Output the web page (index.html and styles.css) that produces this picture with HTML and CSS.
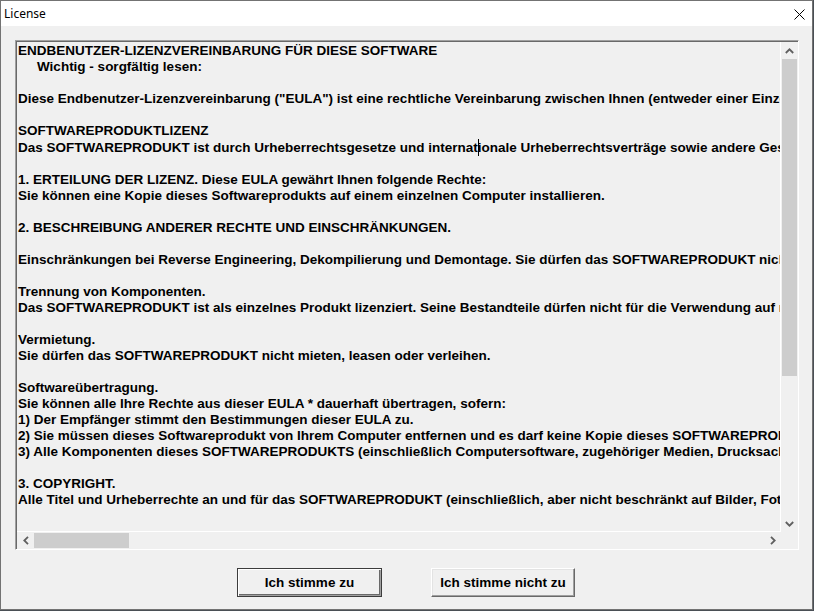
FILE: index.html
```html
<!DOCTYPE html>
<html lang="de">
<head>
<meta charset="utf-8">
<title>License</title>
<link rel="stylesheet" href="styles.css">
</head>
<body>
<div class="window">
  <div class="titlebar">
    <span class="title">License</span>
    <span class="close">
      <svg width="11" height="11" viewBox="0 0 11 11"><path d="M0.5 0.5 L10.5 10.5 M10.5 0.5 L0.5 10.5" stroke="#000" stroke-width="1" fill="none"/></svg>
    </span>
  </div>
  <div class="content">
    <div class="editbox">
      <div class="inner">
        <div class="text">ENDBENUTZER-LIZENZVEREINBARUNG FÜR DIESE SOFTWARE
<span class="indent">Wichtig - sorgfältig lesen:</span>

Diese Endbenutzer-Lizenzvereinbarung ("EULA") ist eine rechtliche Vereinbarung zwischen Ihnen (entweder einer Einzelperson oder einer juristischen Person) und dem Hersteller.

SOFTWAREPRODUKTLIZENZ
Das SOFTWAREPRODUKT ist durch Urheberrechtsgesetze und internat<span class="caret"></span>ionale Urheberrechtsverträge sowie andere Gesetze und Verträge zum Schutz geistigen Eigentums geschützt.

1. ERTEILUNG DER LIZENZ. Diese EULA gewährt Ihnen folgende Rechte:
Sie können eine Kopie dieses Softwareprodukts auf einem einzelnen Computer installieren.

2. BESCHREIBUNG ANDERER RECHTE UND EINSCHRÄNKUNGEN.

Einschränkungen bei Reverse Engineering, Dekompilierung und Demontage. Sie dürfen das SOFTWAREPRODUKT nicht zurückentwickeln, dekompilieren oder disassemblieren.

Trennung von Komponenten.
Das SOFTWAREPRODUKT ist als einzelnes Produkt lizenziert. Seine Bestandteile dürfen nicht für die Verwendung auf mehr als einem Computer getrennt werden.

Vermietung.
Sie dürfen das SOFTWAREPRODUKT nicht mieten, leasen oder verleihen.

Softwareübertragung.
Sie können alle Ihre Rechte aus dieser EULA * dauerhaft übertragen, sofern:
1) Der Empfänger stimmt den Bestimmungen dieser EULA zu.
2) Sie müssen dieses Softwareprodukt von Ihrem Computer entfernen und es darf keine Kopie dieses SOFTWAREPRODUKTS zurückbleiben.
3) Alle Komponenten dieses SOFTWAREPRODUKTS (einschließlich Computersoftware, zugehöriger Medien, Drucksachen und Online-Dokumentation) werden übertragen.

3. COPYRIGHT.
Alle Titel und Urheberrechte an und für das SOFTWAREPRODUKT (einschließlich, aber nicht beschränkt auf Bilder, Fotos, Animationen, Video, Audio, Musik und Text) liegen beim Hersteller.</div>
        <div class="vscroll">
          <div class="sbtn">
            <svg width="9" height="6" viewBox="0 0 9 6"><path d="M0.8 5 L4.5 1.3 L8.2 5" stroke="#606060" stroke-width="1.8" fill="none"/></svg>
          </div>
          <div class="vtrack"><div class="vthumb"></div></div>
          <div class="sbtn">
            <svg width="9" height="6" viewBox="0 0 9 6"><path d="M0.8 1 L4.5 4.7 L8.2 1" stroke="#606060" stroke-width="1.8" fill="none"/></svg>
          </div>
        </div>
        <div class="hscroll">
          <div class="sbtn">
            <svg width="6" height="9" viewBox="0 0 6 9"><path d="M5 0.8 L1.3 4.5 L5 8.2" stroke="#606060" stroke-width="1.8" fill="none"/></svg>
          </div>
          <div class="htrack"><div class="hthumb"></div></div>
          <div class="sbtn">
            <svg width="6" height="9" viewBox="0 0 6 9"><path d="M1 0.8 L4.7 4.5 L1 8.2" stroke="#606060" stroke-width="1.8" fill="none"/></svg>
          </div>
        </div>
        <div class="corner"></div>
      </div>
    </div>
    <div class="buttons">
      <button class="btn default">Ich stimme zu</button>
      <button class="btn">Ich stimme nicht zu</button>
    </div>
  </div>
</div>
</body>
</html>
```
FILE: styles.css
```css
html, body {
  margin: 0;
  padding: 0;
  background: #4a4f55;
}
body {
  width: 814px;
  height: 611px;
  overflow: hidden;
}
.window {
  box-sizing: border-box;
  width: 813px;
  height: 610px;
  border: 1px solid #737373;
  background: #f0f0f0;
  display: flex;
  flex-direction: column;
}
.titlebar {
  height: 25px;
  flex: none;
  background: #ffffff;
  display: flex;
  align-items: center;
  justify-content: space-between;
  padding: 0 7px 0 3px;
}
.title {
  font-family: "Noto Sans", "Liberation Sans", sans-serif;
  font-size: 12px;
  color: #000;
  padding-bottom: 1px;
}
.close {
  display: flex;
  align-items: center;
  padding-top: 1px;
}
.content {
  flex: 1;
  display: flex;
  flex-direction: column;
  padding: 14px 0 0 14px;
}
.editbox {
  box-sizing: border-box;
  width: 784px;
  height: 510px;
  border-style: solid;
  border-width: 1px;
  border-color: #a0a0a0 #ffffff #ffffff #a0a0a0;
}
.inner {
  box-sizing: border-box;
  height: 100%;
  border-top: 1px solid #696969;
  border-left: 1px solid #696969;
  display: grid;
  grid-template-columns: 764px 17px;
  grid-template-rows: 490px 17px;
}
.text {
  box-sizing: border-box;
  overflow: hidden;
  white-space: pre;
  border-right: 1px solid #ffffff;
  border-bottom: 1px solid #ffffff;
  padding: 1px 0 0 1px;
  font-family: "Liberation Sans", Arial, sans-serif;
  font-weight: bold;
  font-size: 13.5px;
  line-height: 16px;
  color: #000;
}
.indent {
  padding-left: 19px;
}
.caret {
  display: inline-block;
  width: 1px;
  height: 17px;
  margin-right: -1px;
  background: #000;
  vertical-align: -4px;
}
.vscroll {
  display: flex;
  flex-direction: column;
  background: #f0f0f0;
}
.hscroll {
  display: flex;
  flex-direction: row;
  background: #f0f0f0;
}
.sbtn {
  flex: none;
  width: 17px;
  height: 17px;
  display: flex;
  align-items: center;
  justify-content: center;
}
.vtrack {
  flex: 1;
  padding-left: 1px;
}
.vthumb {
  width: 15px;
  height: 317px;
  background: #cdcdcd;
}
.htrack {
  flex: 1;
  padding-top: 1px;
}
.hthumb {
  width: 95px;
  height: 15px;
  background: #cdcdcd;
}
.corner {
  background: #f0f0f0;
}
.buttons {
  margin-top: 18px;
  margin-left: -14px;
  display: flex;
  justify-content: center;
  gap: 49px;
  padding-right: 1px;
}
.btn {
  box-sizing: border-box;
  width: 144px;
  height: 29px;
  margin: 0;
  padding: 0;
  background: #f0f0f0;
  font-family: "Liberation Sans", Arial, sans-serif;
  font-weight: bold;
  font-size: 13.5px;
  color: #000;
  border-style: solid;
  border-width: 1px;
  border-color: #ffffff #696969 #696969 #ffffff;
  box-shadow: inset -1px -1px 0 #a0a0a0, inset 1px 1px 0 #e3e3e3;
}
.btn.default {
  width: 145px;
  border: 1px solid #3c3c3c;
  box-shadow: inset 1px 1px 0 #ffffff, inset -1px -1px 0 #a0a0a0, inset -2px -2px 0 #696969;
}
```
